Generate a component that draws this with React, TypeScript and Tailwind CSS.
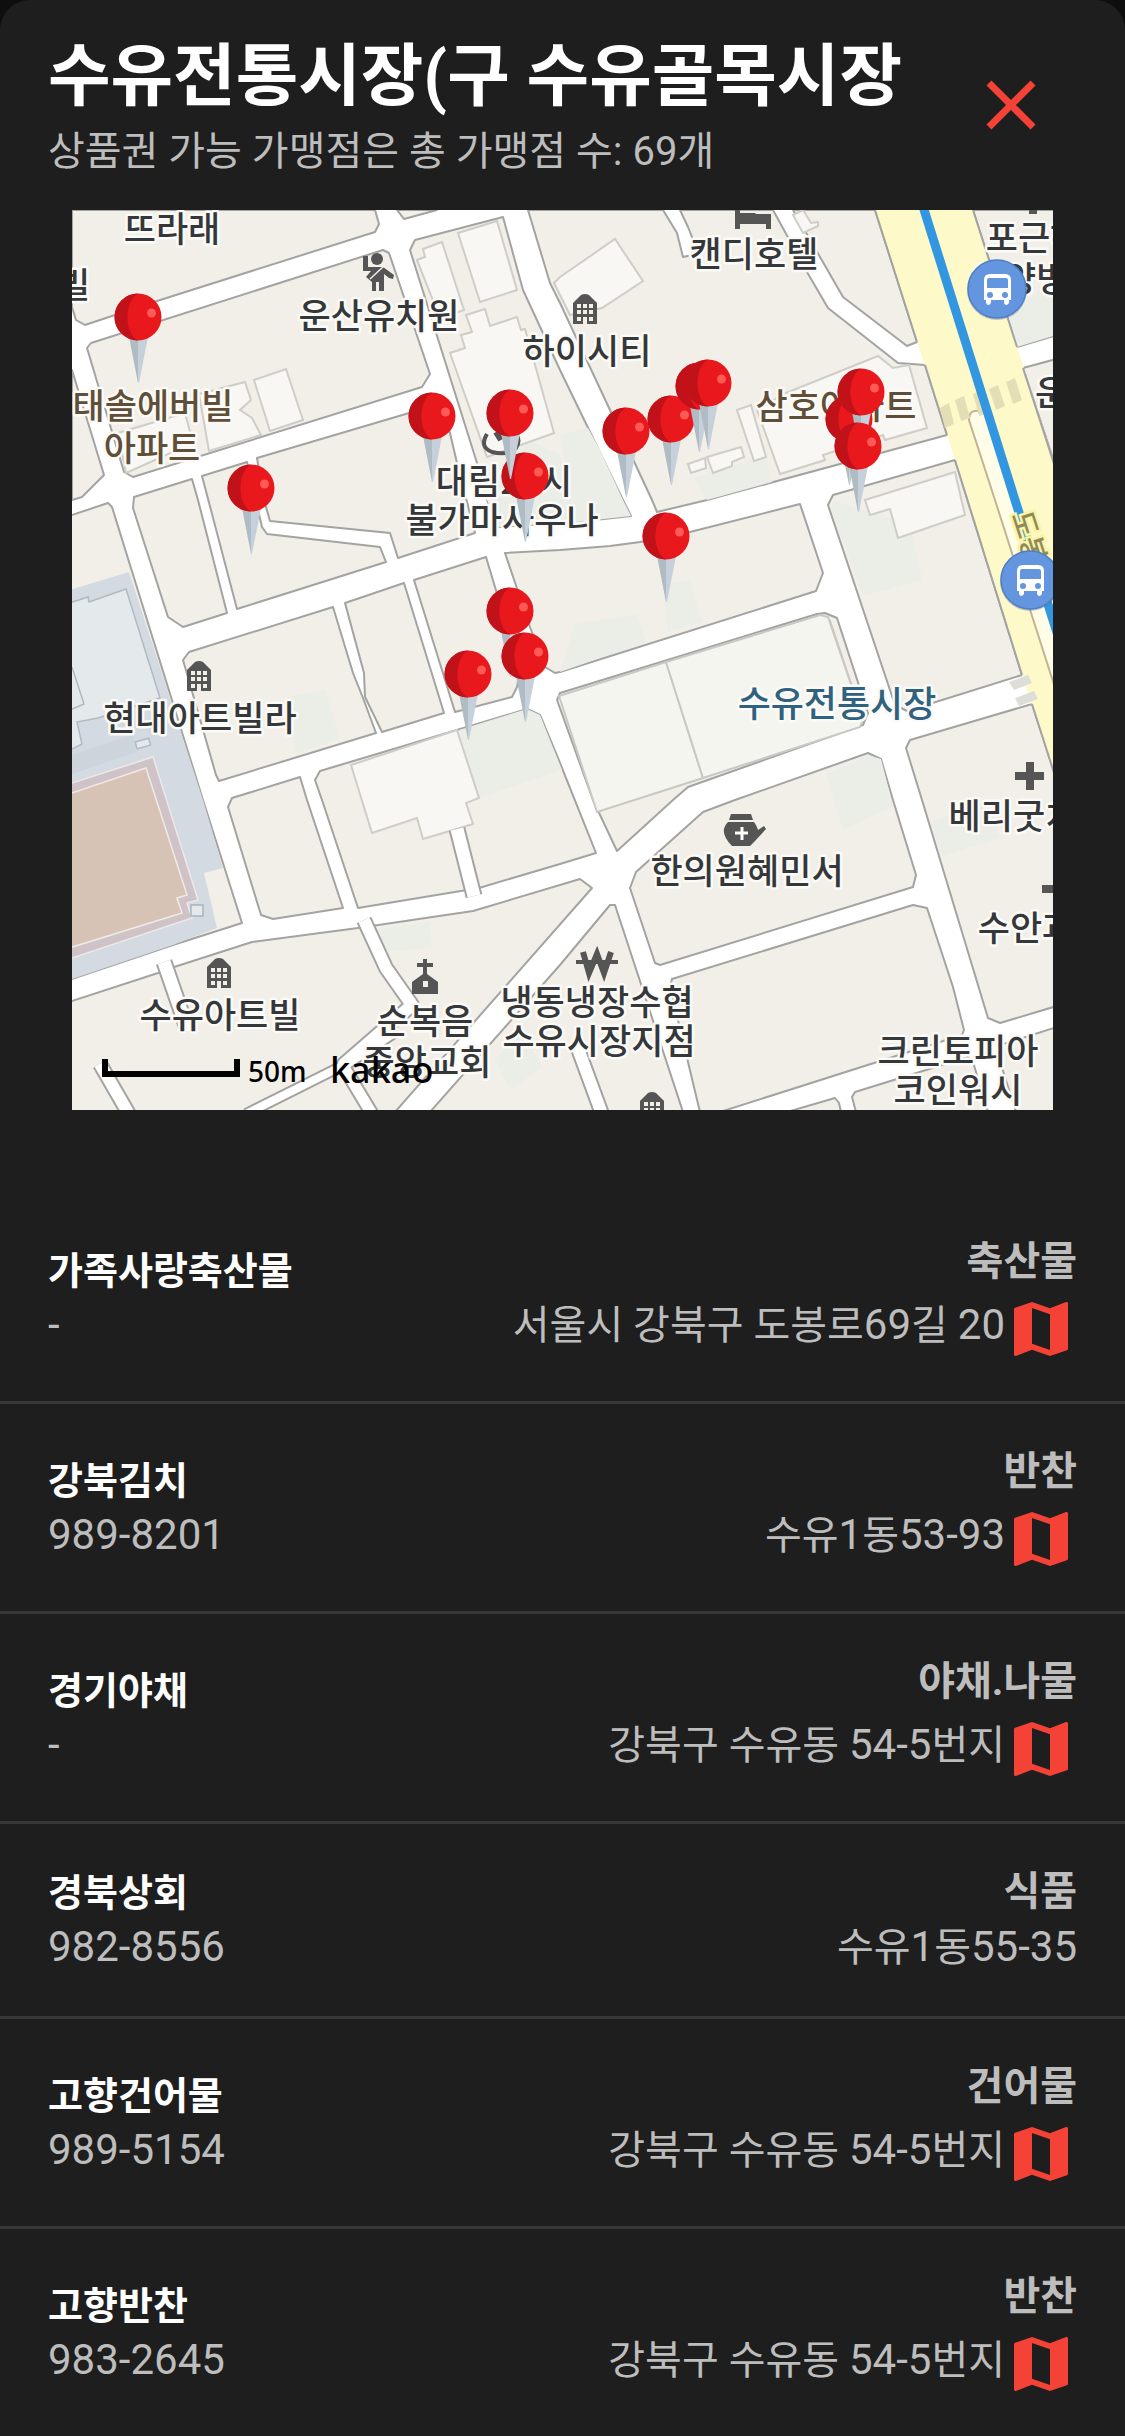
import { MdClose, MdMap } from "react-icons/md";

type Store = {
  name: string;
  phone: string;
  category: string;
  address: string;
  hasMap: boolean;
};

const stores: Store[] = [
  { name: "가족사랑축산물", phone: "-", category: "축산물", address: "서울시 강북구 도봉로69길 20", hasMap: true },
  { name: "강북김치", phone: "989-8201", category: "반찬", address: "수유1동53-93", hasMap: true },
  { name: "경기야채", phone: "-", category: "야채.나물", address: "강북구 수유동 54-5번지", hasMap: true },
  { name: "경북상회", phone: "982-8556", category: "식품", address: "수유1동55-35", hasMap: false },
  { name: "고향건어물", phone: "989-5154", category: "건어물", address: "강북구 수유동 54-5번지", hasMap: true },
  { name: "고향반찬", phone: "983-2645", category: "반찬", address: "강북구 수유동 54-5번지", hasMap: true },
];

const blocks = [
  "72,210 375,210 379,224 375,232 157,301 85,325 76,320 72,307",
  "397,210 404,219 437,210",
  "87,348 91,343 383,250 389,253 430,374 422,387 133,477 124,472",
  "72,370 104,475 82,497 72,500",
  "410,250 415,240 503,217 523,290 560,370 623,500 631,516 577,522 497,527 488,503 477,463",
  "257,458 443,403 457,463 475,533 398,558 390,533 270,521 264,500",
  "505,553 560,550 610,546 640,542 690,532 800,504 823,573 816,591 560,672 555,673 545,667 530,627",
  "528,210 550,283 560,303 652,500 657,512 707,500 947,435 925,365 898,363 828,308 807,272 773,210 680,210 688,227 692,237 692,255 683,257 677,233 663,210",
  "793,210 843,297 907,346 917,342 875,210",
  "973,210 1060,210 1060,334 1017,347",
  "1060,358 1023,368 1060,480",
  "828,505 833,495 955,460 1022,675 907,711 895,705",
  "557,700 560,693 817,614 825,613 837,618 868,713 863,725 688,787 673,800 617,851 593,800",
  "735,800 868,753 881,759 893,800 916,875 913,887 660,965 655,963 630,888 636,872 703,812",
  "910,740 906,748 922,800 988,1018 1000,1023 1060,1005 1060,790 1032,704",
  "913,905 927,908 953,987 964,1030 962,1035 720,1112 700,1112 670,987 672,979",
  "615,905 610,905 560,965 430,1112 683,1112",
  "787,1112 835,1098 839,1103 841,1112",
  "856,1112 852,1097 855,1092 968,1057 973,1062 988,1112",
  "1060,1026 1000,1045 997,1052 1016,1112 1060,1112",
  "171,968 252,942 358,928 473,911 580,879 592,888 395,1112 66,1112 66,1003 158,973",
  "66,517 108,503 112,507 203,800 242,923 173,945 66,981",
  "134,497 192,479 198,500 227,613 183,627 168,617 133,508",
  "202,476 247,462 262,527 267,534 380,547 386,562 237,609",
  "183,660 189,652 333,607 353,673 363,698 376,733 219,781 216,775",
  "345,603 404,583 444,713 382,732 365,697 364,673",
  "414,580 486,557 520,670 517,687 512,697 455,712",
  "232,798 300,777 307,800 343,908 273,919 261,915 228,807",
  "315,780 320,771 527,709 540,715 560,763 596,853 560,864 479,888 358,908 322,800",
];

// open yards and planted ground inside the blocks
const yards = [
  "459,730 527,709 540,715 562,770 479,798",
  "287,697 325,690 340,738 296,754",
  "371,930 430,922 432,948 385,952",
  "833,500 910,525 922,580 863,596 832,510",
  "826,774 868,755 881,759 893,806 843,830",
  "930,822 990,800 1000,838 942,856",
  "663,585 689,580 702,622 668,632",
  "575,624 637,614 646,642 560,672",
  "560,435 588,428 600,450 623,500 631,516 577,522",
  "694,478 765,455 772,482 707,500",
  "1017,347 1009,318 1060,270 1060,334",
  "480,480 530,440 560,455 577,522 497,527",
  "495,1060 520,1030 543,1067 510,1090",
];

const buildings = [
  "458,233 497,221 517,290 480,302",
  "417,260 425,257 423,249 442,242 464,310 440,318",
  "466,315 485,309 490,326 517,317 521,330 525,329 554,433 487,457 450,353 465,348 461,335 472,332",
  "554,283 560,277 615,239 643,281 602,308 570,315",
  "786,393 878,356 893,368 909,365 927,428 885,440 883,435 823,455 825,460 780,474 757,410",
  "737,410 751,405 766,457 754,461",
  "707,457 741,447 744,457 732,462 732,466 713,473",
  "688,464 705,458 706,468 691,473",
  "118,433 185,413 193,443 126,473",
  "199,394 245,382 251,400 240,410 252,418 261,435 209,451",
  "254,380 286,369 303,420 270,431",
  "793,215 803,210 811,223 818,222 818,226 803,233",
  "865,500 955,472 965,515 898,538 890,509 870,515",
  "351,765 457,730 479,798 466,803 473,824 423,839 417,818 372,833",
];

const lanes: { d: string; w: number }[] = [
  { d: "M364 920 L386 968 L412 1005 L344 1064 L395 1030", w: 12 },
  { d: "M412 1005 L342 1066 L246 1114", w: 8 },
  { d: "M342 1064 L372 1114", w: 11 },
  { d: "M164 962 L188 1031", w: 13 },
  { d: "M100 1064 L130 1116", w: 12 },
  { d: "M457 829 L474 896", w: 13 },
  { d: "M577 1046 L602 1114", w: 12 },
];

const pins = [
  [138, 317],
  [251, 488],
  [432, 416],
  [525, 476],
  [510, 413],
  [626, 431],
  [671, 419],
  [699, 386],
  [708, 383],
  [849, 419],
  [861, 392],
  [858, 446],
  [666, 536],
  [510, 611],
  [525, 656],
  [468, 674],
];

const labels = [
  { x: 172, y: 242, text: "뜨라래" },
  { x: 74, y: 298, text: "빌" },
  { x: 379, y: 329, text: "운산유치원" },
  { x: 587, y: 364, text: "하이시티" },
  { x: 754, y: 267, text: "캔디호텔" },
  { x: 1034, y: 251, text: "포근하" },
  { x: 1020, y: 292, text: "요양병" },
  { x: 1051, y: 406, text: "운" },
  { x: 504, y: 494, text: "대림24시" },
  { x: 502, y: 533, text: "불가마사우나" },
  { x: 200, y: 731, text: "현대아트빌라" },
  { x: 1013, y: 829, text: "베리굿치" },
  { x: 1026, y: 941, text: "수안과" },
  { x: 747, y: 884, text: "한의원혜민서" },
  { x: 220, y: 1028, text: "수유아트빌" },
  { x: 425, y: 1034, text: "순복음" },
  { x: 427, y: 1075, text: "중앙교회" },
  { x: 597, y: 1015, text: "냉동냉장수협" },
  { x: 599, y: 1054, text: "수유시장지점" },
  { x: 958, y: 1064, text: "크린토피아" },
  { x: 958, y: 1103, text: "코인워시" },
];

const Pin = ({ x, y }: { x: number; y: number }) => (
  <g transform={`translate(${x} ${y})`}>
    <path d="M-9 20 H0 V66 Z" fill="#b0bcc3" />
    <path d="M0 20 H10 L1 66 H0 Z" fill="#c5d0da" />
    <circle r="23.5" fill="#e9181d" />
    <path d="M0 -23.5 A23.5 23.5 0 0 0 0 23.5 C-14 16 -14 -16 0 -23.5 Z" fill="#c1121a" />
    <circle cx="13.5" cy="-4" r="4.5" fill="#ff5a55" />
  </g>
);

const House = ({ x, y }: { x: number; y: number }) => (
  <g transform={`translate(${x} ${y})`}>
    <path d="M-12 30 V9 L-4 1 Q0 -1 4 1 L12 9 V30 H2 V23 H-2 V30 Z" fill="#555" />
    {[10, 16, 23].map((row) => (
      <g key={row} fill="#f2efe9">
        <rect x="-8" y={row} width="4" height="4" />
        <rect x="-2" y={row} width="4" height="4" />
        <rect x="4" y={row} width="4" height="4" />
      </g>
    ))}
  </g>
);

const BusStop = ({ x, y }: { x: number; y: number }) => (
  <g transform={`translate(${x} ${y})`}>
    <circle cy="1" r="30" fill="#5a6f95" opacity="0.35" />
    <circle r="29" fill="#6396df" stroke="#4f7ec6" strokeWidth="1.5" />
    <path
      fill="#fff"
      fillRule="evenodd"
      d="M-7 -15 H8 Q14 -15 14 -9 V11 H12 V14 Q9 18 7 14 V11 H-6 V14 Q-9 18 -11 14 V11 H-13 V-9 Q-13 -15 -7 -15 Z M-8 -11 Q-10 -11 -10 -9 V-1 H11 V-9 Q11 -11 9 -11 Z"
    />
    <circle cx="-7" cy="6" r="3" fill="#6396df" />
    <circle cx="8" cy="6" r="3" fill="#6396df" />
  </g>
);

const MarketMap = () => {
  return (
    <svg viewBox="72 210 981 900" className="block w-full" role="img">
      <rect x="72" y="210" width="981" height="900" fill="#fff" />

      <g fill="#f2efe9" stroke="#a3a3a1" strokeWidth="2" strokeLinejoin="round">
        {blocks.map((points) => (
          <polygon key={points} points={points} />
        ))}
      </g>
      <g fill="#ebede7">
        {yards.map((points) => (
          <polygon key={points} points={points} />
        ))}
      </g>

      {/* school ground */}
      <polygon points="66,591 129,572 203,800 223,868 204,873 217,928 173,945 66,981" fill="#d4dae1" />
      <polygon
        points="66,604 88,597 89,602 126,589 160,698 98,718 77,722 82,744 66,752"
        fill="#e4e9ec"
        stroke="#b3b9c1"
        strokeWidth="1.5"
      />
      <path d="M72 667 L84 704 L70 710" fill="none" stroke="#b3b9c1" strokeWidth="1.5" />
      <polygon points="66,757 132,735 137,752 66,776" fill="#cbd5db" />
      <rect x="136" y="740" width="14" height="7" fill="#e4e9ec" stroke="#b3b9c1" strokeWidth="1.5" transform="rotate(-16 143 744)" />
      <polygon
        points="66,785 153,757 198,900 187,903 192,918 66,960"
        fill="#cfc3c8"
        stroke="#ece8e8"
        strokeWidth="1.5"
      />
      <polygon
        points="66,795 146,768 187,895 177,898 182,913 66,949"
        fill="#d6c3b5"
        stroke="#f1eae6"
        strokeWidth="1.5"
      />
      <rect x="191" y="905" width="12" height="11" fill="#e4e9ec" stroke="#a9b3bd" strokeWidth="1.5" />

      <g fill="#f8f7f3" stroke="#cfcdc8" strokeWidth="2">
        {buildings.map((points) => (
          <polygon key={points} points={points} />
        ))}
      </g>
      <g fill="#f5f5f0" stroke="#c9c8c3" strokeWidth="2">
        <polygon points="559,696 666,662 703,778 597,812" />
        <polygon points="666,662 820,615 828,617 853,690 865,714 860,727 703,778" />
      </g>
      <path d="M830 620 L852 686" stroke="#c9c8c3" strokeWidth="1.5" />

      {/* narrow lanes, outline first so that junctions stay open */}
      <g fill="none" strokeLinejoin="round">
        {lanes.map((lane) => (
          <path key={lane.d} d={lane.d} stroke="#a3a3a1" strokeWidth={lane.w + 4} />
        ))}
        {lanes.map((lane) => (
          <path key={lane.d} d={lane.d} stroke="#fff" strokeWidth={lane.w} />
        ))}
      </g>

      {/* main road with the subway line */}
      <polygon points="875,210 973,210 1060,480 1060,790 1022,675 968,500" fill="#fdf9c8" />
      <g stroke="#a3a3a1" strokeWidth="2" fill="none">
        <path d="M875 210 L917 342" />
        <path d="M925 365 L947 435" />
        <path d="M955 460 L1022 675" />
        <path d="M1032 704 L1056 779" />
        <path d="M973 210 L1017 347" />
        <path d="M1023 368 L1056 470" />
      </g>
      <path
        d="M1064 716 L995 500 L969 420 Q969 409 979 411 L985 413 L1064 650 Z"
        fill="#fffde8"
        stroke="#c3b393"
        strokeWidth="2"
      />
      <g fill="#e4deb6">
        <polygon points="940,408 949,403 954,424 945,428" />
        <polygon points="955,400 964,396 970,418 961,421" />
        <polygon points="973,394 982,390 988,413 979,416" />
        <polygon points="989,389 998,385 1005,406 996,410" />
        <polygon points="1006,382 1015,378 1022,400 1013,404" />
      </g>
      <g fill="#deddd8">
        <polygon points="1009,682 1028,675 1032,683 1014,690" />
        <polygon points="1015,698 1034,691 1038,699 1019,706" />
      </g>
      <path d="M921 200 L1015 500 L1058 636" fill="none" stroke="#3296e0" strokeWidth="9" />

      <g className="[font-family:'Noto_Sans_CJK_KR',sans-serif] font-medium" textAnchor="middle">
        <text
          transform="translate(1011 515) rotate(72)"
          textAnchor="start"
          fontSize="29"
          fill="#8f8a5c"
          stroke="#fbf4a4"
          strokeWidth="5"
          paintOrder="stroke"
        >
          도봉로
        </text>
        <g fontSize="35" fill="#35383a" stroke="#fbfaf6" strokeWidth="5" strokeLinejoin="round" paintOrder="stroke">
          {labels.map((label) => (
            <text key={label.text} x={label.x} y={label.y}>
              {label.text}
            </text>
          ))}
          <g fill="#5f4f38">
            <text x="153" y="419">태솔에버빌</text>
            <text x="152" y="461">아파트</text>
            <text x="836" y="419">삼호아파트</text>
          </g>
          <text x="837" y="717" fontSize="36" fill="#2f6280">수유전통시장</text>
        </g>
      </g>

      <House x={585} y={294} />
      <House x={199} y={661} />
      <House x={219} y={958} />
      <House x={652} y={1092} />

      {/* kindergarten */}
      <g fill="#555">
        <circle cx="377" cy="259" r="6" />
        <path d="M363 256 L368 256 V267 H383 L394 275 L393 279 L389 278 L384 274 V291 H379 V282 H376 V291 H372 V282 L366 277 L371 271 H363 Z" />
        <path d="M370 279 L384 266" stroke="#f2efe9" strokeWidth="1.5" />
      </g>
      {/* hotel bed */}
      <path d="M735 210 H740 V213 H755 L756 214 H771 V229 H766 V224 H740 V229 H735 Z" fill="#555" />
      {/* sauna */}
      <g stroke="#555" fill="none" strokeWidth="4">
        <path d="M487 434 Q479 447 492 452 Q508 456 516 448 Q521 440 516 434" />
        <path d="M496 432 L501 440" strokeWidth="6" />
      </g>
      {/* church */}
      <path
        fill="#555"
        fillRule="evenodd"
        d="M423 959 H427 V963 H433 V967 H427 V974 L438 982 V994 H412 V982 L423 974 V967 H417 V963 H423 Z M423 981 V987 H428 V981 Z"
      />
      {/* bank */}
      <g fill="none" stroke="#555">
        <path d="M583 952 L589 973 L597 954 L604 973 L611 952" strokeWidth="6" />
        <path d="M576 962 H618" strokeWidth="4" />
      </g>
      {/* herbal clinic */}
      <path
        d="M731 814 H751 L753 820 H729 Z M728 822 H754 Q757 826 758 830 L764 826 L766 829 L755 841 Q753 843 750 846 H732 Q718 832 728 822 Z"
        fill="#555"
      />
      <path d="M735 833 H748 M742 827 V840" stroke="#fff" strokeWidth="3" />
      {/* hospitals */}
      <g stroke="#555" strokeWidth="8">
        <path d="M1015 776 H1044 M1030 762 V790" />
        <path d="M1042 889 H1071" />
        <path d="M1033 205 V214" />
      </g>

      <BusStop x={997} y={289} />
      <BusStop x={1030} y={580} />

      {pins.map(([x, y]) => (
        <Pin key={`${x}-${y}`} x={x} y={y} />
      ))}

      <path d="M105 1059 V1074 H237 V1059" fill="none" stroke="#000" strokeWidth="6" />
      <g className="[font-family:'Noto_Sans',sans-serif] font-medium" fill="#000">
        <text x="248" y="1082" fontSize="28">50m</text>
        <text x="330" y="1083" fontSize="36">kakao</text>
      </g>
    </svg>
  );
};

// Digits are set a little larger than the hangul around them
const Address = ({ text }: { text: string }) => (
  <p className="pb-2 text-[40px] leading-[49px]">
    {text.split(/([\d-]+)/).map((part, i) =>
      i % 2 ? (
        <span key={i} className="text-[42px] leading-none">
          {part}
        </span>
      ) : (
        part
      )
    )}
  </p>
);

const StoreRow = ({ store }: { store: Store }) => {
  return (
    <li className="flex items-center justify-between border-b-[3px] border-[#383838] px-12 py-9">
      <div className="flex flex-col">
        <h2 className="text-[38px] leading-[54px] font-bold text-white">{store.name}</h2>
        <p className="text-[42px] leading-[54px]">{store.phone}</p>
      </div>
      <div className="flex flex-col items-end">
        <p className="text-[40px] leading-[63px] font-bold">{store.category}</p>
        <div className="flex items-center">
          <Address text={store.address} />
          {store.hasMap && (
            <button type="button" aria-label={store.name} className="text-[#f44336]">
              <MdMap className="size-18" />
            </button>
          )}
        </div>
      </div>
    </li>
  );
};

export default function App() {
  return (
    <div className="min-h-screen bg-[#0e0e0e]">
      <main className="min-h-screen overflow-hidden rounded-t-[30px] bg-[#1e1e1e] text-[#bdbdbd] [font-family:Roboto,'Noto_Sans_CJK_KR',sans-serif]">
        <header className="flex items-center justify-between pt-[30px] pr-[72px] pl-12">
          <div className="flex flex-col">
            <h1 className="text-[68px] leading-[94px] font-bold text-white">수유전통시장(구 수유골목시장</h1>
            <p className="text-[40px] leading-[56px]">상품권 가능 가맹점은 총 가맹점 수: 69개</p>
          </div>
          <button type="button" aria-label="닫기" className="text-[#f44336]">
            <MdClose className="size-[84px]" />
          </button>
        </header>
        <div className="px-[72px] pt-[30px] pb-[84px]">
          <MarketMap />
        </div>
        <ul>
          {stores.map((store) => (
            <StoreRow key={store.name} store={store} />
          ))}
        </ul>
      </main>
    </div>
  );
}
